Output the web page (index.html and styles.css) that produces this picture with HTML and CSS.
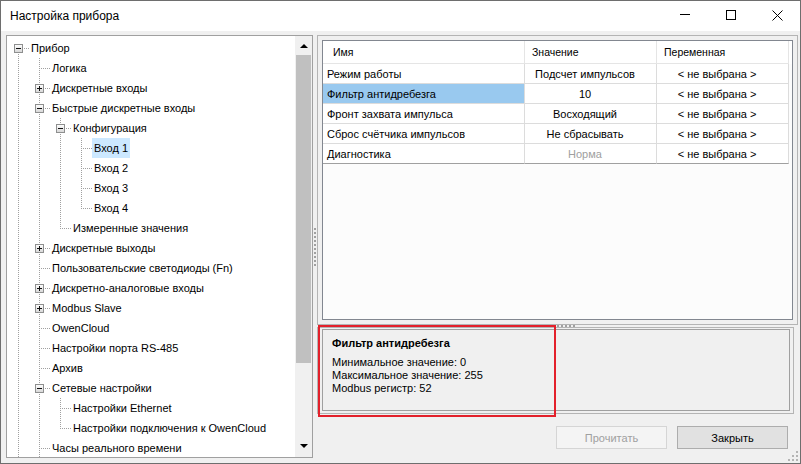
FILE: index.html
```html
<!DOCTYPE html>
<html>

<head>
    <meta charset="UTF-8" />
    <title>Настройка прибора</title>
    <link rel="stylesheet" href="styles.css">
</head>

<body>
    <div class="window">
        <div class="titlebar">
            <span class="caption">Настройка прибора</span>
            <div class="controls">
                <span class="ctl"><svg width="10" height="10"><path d="M0 4.5H10" stroke="#000" /></svg></span>
                <span class="ctl"><svg width="10" height="10"><rect x="0.5" y="0.5" width="9" height="9" fill="none" stroke="#000" /></svg></span>
                <span class="ctl"><svg width="11" height="11"><path d="M0.5 0.5L10.5 10.5M10.5 0.5L0.5 10.5" stroke="#000" /></svg></span>
            </div>
        </div>
        <div class="client">
            <div class="tree-box">
                <div class="tree">
                    <div class="node"><span class="c root"><span class="box minus"></span></span><span class="label">Прибор</span></div>
                    <div class="node"><span class="c ln"></span><span class="c tee"></span><span class="label">Логика</span></div>
                    <div class="node"><span class="c ln"></span><span class="c tee"><span class="box plus"></span></span><span class="label">Дискретные входы</span></div>
                    <div class="node"><span class="c ln"></span><span class="c tee"><span class="box minus"></span></span><span class="label">Быстрые дискретные входы</span></div>
                    <div class="node"><span class="c ln"></span><span class="c ln"></span><span class="c tee"><span class="box minus"></span></span><span class="label">Конфигурация</span></div>
                    <div class="node"><span class="c ln"></span><span class="c ln"></span><span class="c ln"></span><span class="c tee"></span><span class="label sel">Вход 1</span></div>
                    <div class="node"><span class="c ln"></span><span class="c ln"></span><span class="c ln"></span><span class="c tee"></span><span class="label">Вход 2</span></div>
                    <div class="node"><span class="c ln"></span><span class="c ln"></span><span class="c ln"></span><span class="c tee"></span><span class="label">Вход 3</span></div>
                    <div class="node"><span class="c ln"></span><span class="c ln"></span><span class="c ln"></span><span class="c end"></span><span class="label">Вход 4</span></div>
                    <div class="node"><span class="c ln"></span><span class="c ln"></span><span class="c end"></span><span class="label">Измеренные значения</span></div>
                    <div class="node"><span class="c ln"></span><span class="c tee"><span class="box plus"></span></span><span class="label">Дискретные выходы</span></div>
                    <div class="node"><span class="c ln"></span><span class="c tee"></span><span class="label">Пользовательские светодиоды (Fn)</span></div>
                    <div class="node"><span class="c ln"></span><span class="c tee"><span class="box plus"></span></span><span class="label">Дискретно-аналоговые входы</span></div>
                    <div class="node"><span class="c ln"></span><span class="c tee"><span class="box plus"></span></span><span class="label">Modbus Slave</span></div>
                    <div class="node"><span class="c ln"></span><span class="c tee"></span><span class="label">OwenCloud</span></div>
                    <div class="node"><span class="c ln"></span><span class="c tee"></span><span class="label">Настройки порта RS-485</span></div>
                    <div class="node"><span class="c ln"></span><span class="c tee"></span><span class="label">Архив</span></div>
                    <div class="node"><span class="c ln"></span><span class="c tee"><span class="box minus"></span></span><span class="label">Сетевые настройки</span></div>
                    <div class="node"><span class="c ln"></span><span class="c ln"></span><span class="c tee"></span><span class="label">Настройки Ethernet</span></div>
                    <div class="node"><span class="c ln"></span><span class="c ln"></span><span class="c end"></span><span class="label">Настройки подключения к OwenCloud</span></div>
                    <div class="node"><span class="c ln"></span><span class="c tee"></span><span class="label">Часы реального времени</span></div>
                </div>
                <div class="vscroll">
                    <div class="sb-btn up"></div>
                    <div class="track">
                        <div class="thumb"></div>
                    </div>
                    <div class="sb-btn down"></div>
                </div>
            </div>
            <div class="vsplit">
                <div class="grip-v"></div>
            </div>
            <div class="right">
                <div class="grid-frame">
                    <div class="grid">
                        <div class="grid-head">
                            <div class="hcell name">Имя</div>
                            <div class="hcell">Значение</div>
                            <div class="hcell">Переменная</div>
                        </div>
                        <div class="row">
                            <div class="cell name">Режим работы</div>
                            <div class="cell val">Подсчет импульсов</div>
                            <div class="cell val">&lt; не выбрана &gt;</div>
                        </div>
                        <div class="row">
                            <div class="cell name selected">Фильтр антидребезга</div>
                            <div class="cell val">10</div>
                            <div class="cell val">&lt; не выбрана &gt;</div>
                        </div>
                        <div class="row">
                            <div class="cell name">Фронт захвата импульса</div>
                            <div class="cell val">Восходящий</div>
                            <div class="cell val">&lt; не выбрана &gt;</div>
                        </div>
                        <div class="row">
                            <div class="cell name">Сброс счётчика импульсов</div>
                            <div class="cell val">Не сбрасывать</div>
                            <div class="cell val">&lt; не выбрана &gt;</div>
                        </div>
                        <div class="row last">
                            <div class="cell name">Диагностика</div>
                            <div class="cell val readonly">Норма</div>
                            <div class="cell val">&lt; не выбрана &gt;</div>
                        </div>
                    </div>
                </div>
                <div class="hsplit">
                    <div class="grip-h"></div>
                </div>
                <div class="info-frame">
                    <div class="info">
                        <div class="info-title">Фильтр антидребезга</div>
                        <div class="info-line">Минимальное значение: 0</div>
                        <div class="info-line">Максимальное значение: 255</div>
                        <div class="info-line">Modbus регистр: 52</div>
                    </div>
                </div>
                <div class="buttons">
                    <button class="btn" disabled>Прочитать</button>
                    <button class="btn">Закрыть</button>
                </div>
                <div class="mark"></div>
            </div>
        </div>
        <svg class="size-grip" width="12" height="12">
            <rect x="9" y="1" width="2" height="2" fill="#b4b4b4" />
            <rect x="5" y="5" width="2" height="2" fill="#b4b4b4" />
            <rect x="9" y="5" width="2" height="2" fill="#b4b4b4" />
            <rect x="1" y="9" width="2" height="2" fill="#b4b4b4" />
            <rect x="5" y="9" width="2" height="2" fill="#b4b4b4" />
            <rect x="9" y="9" width="2" height="2" fill="#b4b4b4" />
        </svg>
    </div>
</body>

</html>
```

FILE: styles.css
```css
* {
    margin: 0;
    padding: 0;
    box-sizing: border-box;
}

body {
    background: #f0f0f0;
    font-family: "Liberation Sans", Arial, sans-serif;
    font-size: 11px;
    color: #000;
}

.window {
    position: relative;
    width: 801px;
    height: 464px;
    border: 1px solid #6e6e6e;
    background: #f0f0f0;
    display: flex;
    flex-direction: column;
}

/* title bar */

.titlebar {
    height: 30px;
    flex: none;
    background: #fff;
    display: flex;
    align-items: center;
}

.caption {
    flex: 1;
    padding-left: 9px;
    font-size: 12px;
}

.controls {
    display: flex;
    align-self: stretch;
}

.ctl {
    width: 46px;
    display: flex;
    justify-content: center;
    padding-top: 9px;
}

.ctl svg {
    display: block;
}

.client {
    flex: 1;
    display: flex;
    align-items: flex-start;
    padding: 4px 2px 0 5px;
}

/* tree */

.tree-box {
    width: 307px;
    height: 423px;
    flex: none;
    display: flex;
    border: 1px solid #a0a0a0;
    background: #fff;
}

.tree {
    flex: 1;
    overflow: hidden;
    padding: 2px 0 0 1px;
}

.node {
    display: flex;
    height: 20px;
    line-height: 20px;
    white-space: nowrap;
}

.c {
    position: relative;
    width: 21px;
    height: 20px;
    flex: none;
}

.c::before,
.c::after {
    content: "";
    position: absolute;
}

.ln::before,
.tee::before,
.end::before,
.root::before {
    left: 10px;
    top: 0;
    width: 1px;
    height: 20px;
    background: repeating-linear-gradient(to bottom, #a0a0a0 0 1px, transparent 1px 2px);
}

.end::before {
    height: 11px;
}

.root::before {
    top: 10px;
    height: 10px;
}

.tee::after,
.end::after,
.root::after {
    left: 10px;
    top: 10px;
    width: 11px;
    height: 1px;
    background: repeating-linear-gradient(to right, #a0a0a0 0 1px, transparent 1px 2px);
}

.box {
    position: absolute;
    left: 6px;
    top: 6px;
    width: 9px;
    height: 9px;
    z-index: 1;
    border: 1px solid #8e8f8f;
    background: linear-gradient(#fdfdfd, #d8d8d8);
}

.box::before {
    content: "";
    position: absolute;
    left: 1px;
    top: 3px;
    width: 5px;
    height: 1px;
    background: #111;
}

.plus::after {
    content: "";
    position: absolute;
    left: 3px;
    top: 1px;
    width: 1px;
    height: 5px;
    background: #111;
}

.label {
    padding: 0 2px;
}

.label.sel {
    background: #cce8ff;
}

/* scrollbar */

.vscroll {
    width: 17px;
    flex: none;
    display: flex;
    flex-direction: column;
    background: #f0f0f0;
}

.sb-btn {
    height: 17px;
    flex: none;
    display: flex;
    justify-content: center;
}

.sb-btn::before {
    content: "";
    width: 0;
    height: 0;
    border-left: 4px solid transparent;
    border-right: 4px solid transparent;
}

.sb-btn.up {
    padding-top: 8px;
}

.sb-btn.up::before {
    border-bottom: 4px solid #000;
}

.sb-btn.down {
    padding-top: 4px;
}

.sb-btn.down::before {
    border-top: 4px solid #000;
}

.track {
    flex: 1;
}

.thumb {
    margin: 2px 1px 0;
    height: 308px;
    background: #c0c0c0;
}

/* splitters */

.vsplit {
    width: 4px;
    height: 423px;
    flex: none;
    display: flex;
    align-items: center;
    justify-content: center;
}

.grip-v {
    width: 2px;
    height: 38px;
    background: repeating-linear-gradient(to bottom, #a0a0a0 0 2px, transparent 2px 4px);
}

.hsplit {
    height: 2px;
    flex: none;
    padding-left: 240px;
}

.grip-h {
    width: 18px;
    height: 2px;
    background: repeating-linear-gradient(to right, #a0a0a0 0 2px, transparent 2px 4px);
}

/* right side */

.right {
    position: relative;
    width: 481px;
    height: 423px;
    flex: none;
    display: flex;
    flex-direction: column;
}

.grid-frame {
    height: 290px;
    flex: none;
    display: flex;
    padding: 4px;
    border: 1px solid #b4b4b4;
}

.grid {
    flex: 1;
    overflow: hidden;
    border: 1px solid #828790;
    background: #fcfcfc;
}

.grid-head {
    display: flex;
    height: 23px;
    background: #fff;
}

.hcell {
    width: 132px;
    padding-left: 7px;
    line-height: 22px;
    font-size: 10.5px;
    border-right: 1px solid #e5e5e5;
    border-bottom: 1px solid #e5e5e5;
}

.hcell.name {
    width: 202px;
    padding-left: 10px;
}

.row {
    display: flex;
    height: 20px;
}

.cell {
    width: 132px;
    height: 20px;
    line-height: 20px;
    white-space: nowrap;
    background: #fff;
    border-right: 1px solid #dcdcdc;
    border-bottom: 1px solid #dcdcdc;
}

.cell.name {
    width: 202px;
    padding-left: 4px;
}

.cell.val {
    text-align: center;
    padding-right: 11px;
}

.cell.selected {
    background: #99c9ef;
}

.cell.readonly {
    color: #a0a0a0;
}

.row.last .cell {
    border-bottom-color: #a0a0a0;
}

.info-frame {
    height: 87px;
    flex: none;
    display: flex;
    margin-right: 4px;
    padding: 1px 3px 2px 4px;
    border: 1px solid #b4b4b4;
}

.info {
    flex: 1;
    padding: 7px 9px 0;
    border: 1px solid #a0a0a0;
    line-height: 13px;
}

.info-title {
    font-weight: bold;
    margin-bottom: 6px;
}

.buttons {
    display: flex;
    justify-content: flex-end;
    gap: 10px;
    margin-top: 12px;
    padding-right: 10px;
}

.btn {
    width: 111px;
    height: 23px;
    font-family: "Liberation Sans", Arial, sans-serif;
    font-size: 11px;
    color: #000;
    background: #e1e1e1;
    border: 1px solid #adadad;
}

.btn:disabled {
    color: #a0a0a0;
    background: #f4f4f4;
    border-color: #d5d5d5;
}

/* annotation frame */

.mark {
    position: absolute;
    left: 1px;
    top: 290px;
    width: 238px;
    height: 92px;
    border: 2px solid #e3212b;
}

.size-grip {
    position: absolute;
    right: 1px;
    bottom: 1px;
}
```
